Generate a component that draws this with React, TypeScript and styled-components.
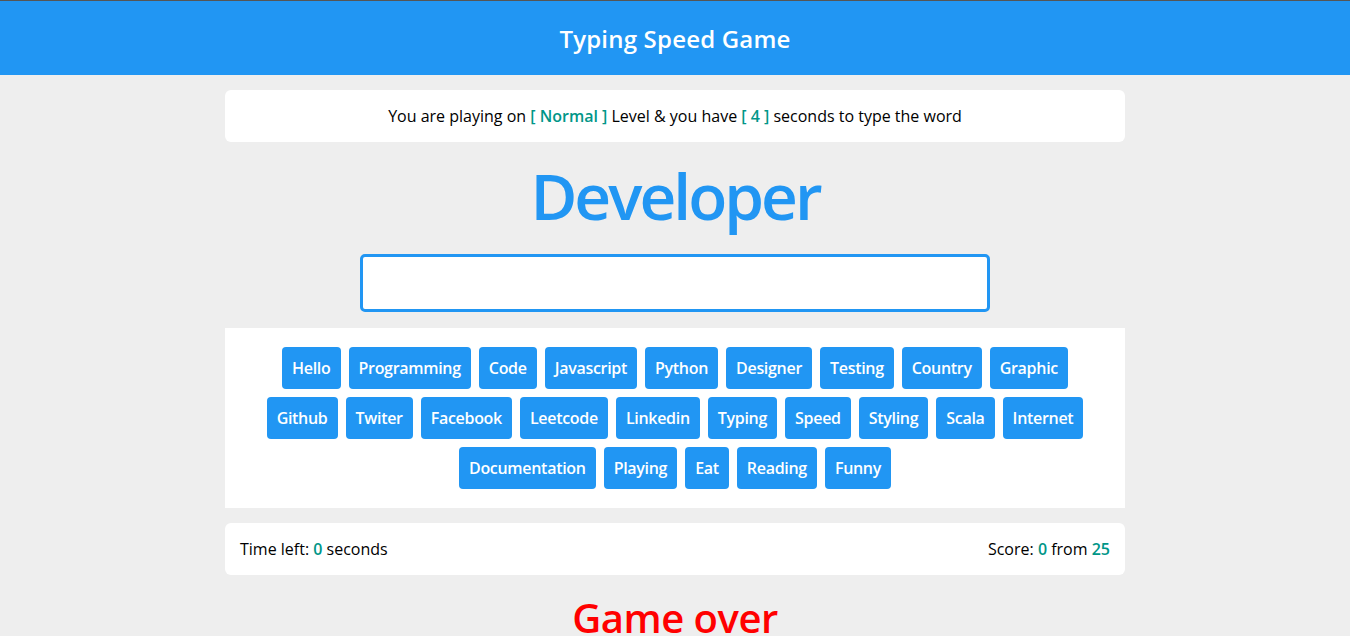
import React from 'react';
import styled, { createGlobalStyle } from 'styled-components';

const GlobalStyle = createGlobalStyle`
    * {
        box-sizing: border-box;
    }
    body {
        margin: 0;
        background-color: #eeeeee;
        font-family: 'Open Sans', 'Noto Sans', sans-serif;
        color: #000;
    }
`;

const Header = styled.h1`
    margin: 0;
    height: 75px;
    border-top: 1px solid #555;
    background-color: #2196f3;
    color: white;
    font-size: 24px;
    font-weight: 600;
    letter-spacing: 0.2px;
    display: flex;
    align-items: center;
    justify-content: center;
`;

const Container = styled.div`
    width: 900px;
    margin: 0 auto;
    display: flex;
    flex-direction: column;
    align-items: center;
`;

const Panel = styled.div<{ $spread?: boolean }>`
    width: 100%;
    background-color: white;
    border-radius: 6px;
    padding: 15px;
    font-size: 16px;
    line-height: 22px;
    display: flex;
    justify-content: ${(p) => (p.$spread ? 'space-between' : 'center')};
`;

const Highlight = styled.span`
    color: #009688;
    font-weight: 600;
`;

const Word = styled.div`
    margin-top: 10px;
    font-size: 64px;
    font-weight: 600;
    letter-spacing: -3px;
    color: #2196f3;
`;

const Input = styled.input`
    margin-top: 15px;
    width: 630px;
    height: 58px;
    border: 3px solid #2196f3;
    border-radius: 5px;
    outline: none;
    font-size: 20px;
    padding: 0 10px;
`;

const WordsBox = styled.div`
    margin-top: 16px;
    width: 100%;
    background-color: white;
    padding: 15px 30px;
    display: flex;
    flex-wrap: wrap;
    justify-content: center;
`;

const WordChip = styled.span`
    margin: 4px;
    padding: 10px;
    background-color: #2196f3;
    color: white;
    border-radius: 4px;
    font-size: 16px;
    font-weight: 600;
    letter-spacing: -0.3px;
    line-height: 22px;
`;

const Footer = styled(Panel)`
    margin-top: 15px;
`;

const GameOver = styled.div`
    margin-top: 15px;
    font-size: 40px;
    font-weight: 600;
    letter-spacing: -0.5px;
    color: red;
`;

const words = [
    'Hello', 'Programming', 'Code', 'Javascript', 'Python', 'Designer', 'Testing', 'Country', 'Graphic',
    'Github', 'Twiter', 'Facebook', 'Leetcode', 'Linkedin', 'Typing', 'Speed', 'Styling', 'Scala', 'Internet',
    'Documentation', 'Playing', 'Eat', 'Reading', 'Funny',
];

const App: React.FC = () => {
    return (
        <>
            <GlobalStyle />
            <Header>Typing Speed Game</Header>
            <Container>
                <Panel style={{ marginTop: 15 }}>
                    <span>
                        You are playing on <Highlight>[ Normal ]</Highlight> Level &amp; you have{' '}
                        <Highlight>[ 4 ]</Highlight> seconds to type the word
                    </span>
                </Panel>
                <Word>Developer</Word>
                <Input />
                <WordsBox>
                    {words.map((w) => (
                        <WordChip key={w}>{w}</WordChip>
                    ))}
                </WordsBox>
                <Footer $spread>
                    <span>
                        Time left: <Highlight>0</Highlight> seconds
                    </span>
                    <span>
                        Score: <Highlight>0</Highlight> from <Highlight>25</Highlight>
                    </span>
                </Footer>
                <GameOver>Game over</GameOver>
            </Container>
        </>
    );
};

export default App;
